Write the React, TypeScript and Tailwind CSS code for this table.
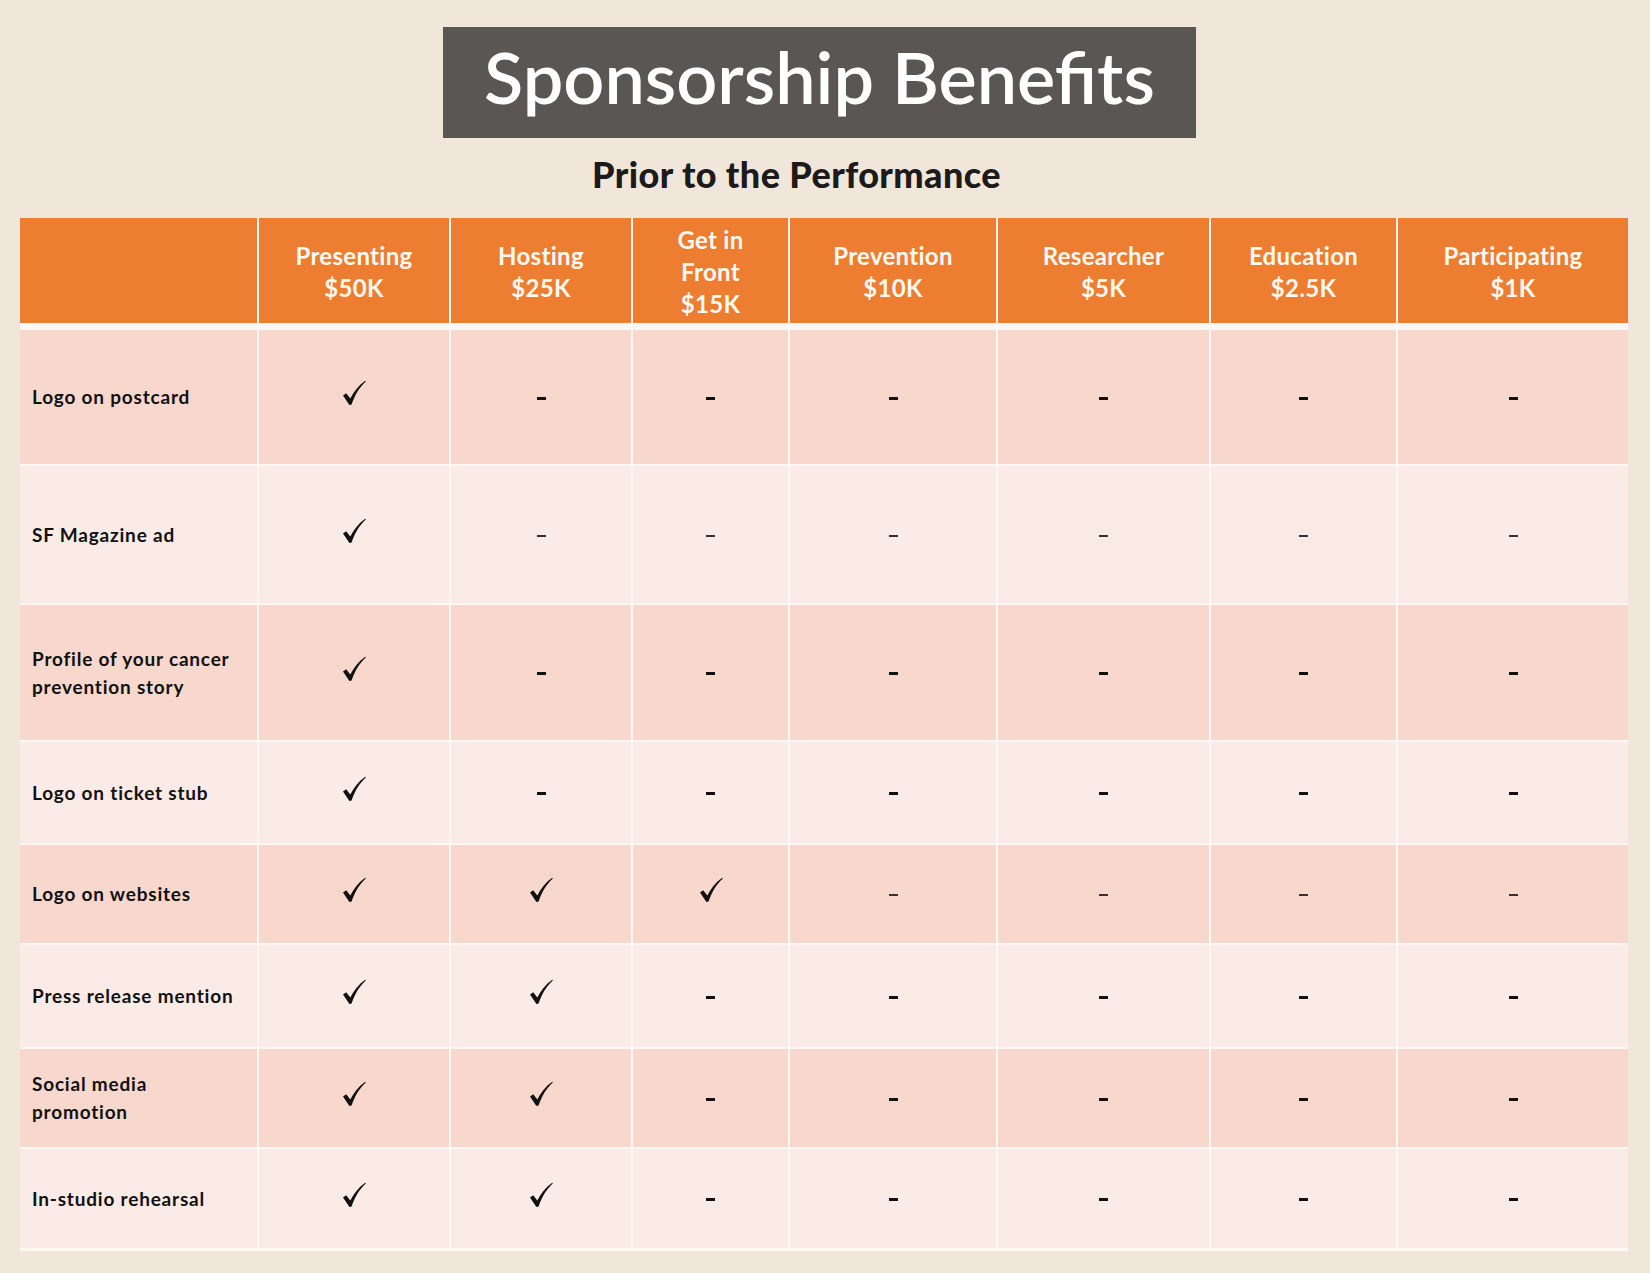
import React from "react";

// Column widths (px) — separators are the 2px grid gap showing the table bg.
const cols = "grid grid-cols-[237px_190px_180px_155px_206px_211px_185px_230px] gap-x-[2px]";

const tiers = [
  ["Presenting", "$50K"],
  ["Hosting", "$25K"],
  ["Get in", "Front", "$15K"],
  ["Prevention", "$10K"],
  ["Researcher", "$5K"],
  ["Education", "$2.5K"],
  ["Participating", "$1K"],
];

type Row = {
  label: string[];
  yes: number; // how many leading tiers get a check
  h: string;
  odd: boolean;
  thin?: boolean;
};

const rows: Row[] = [
  { label: ["Logo on postcard"], yes: 1, h: "h-[134px]", odd: true },
  { label: ["SF Magazine ad"], yes: 1, h: "h-[137px]", odd: false, thin: true },
  { label: ["Profile of your cancer", "prevention story"], yes: 1, h: "h-[135px]", odd: true },
  { label: ["Logo on ticket stub"], yes: 1, h: "h-[101px]", odd: false },
  { label: ["Logo on websites"], yes: 3, h: "h-[98px]", odd: true, thin: true },
  { label: ["Press release mention"], yes: 2, h: "h-[102px]", odd: false },
  { label: ["Social media", "promotion"], yes: 2, h: "h-[98px]", odd: true },
  { label: ["In-studio rehearsal"], yes: 2, h: "h-[99px]", odd: false },
];

function Check() {
  return (
    <svg width="24" height="26" viewBox="0 0 24 26" className="-mt-[8px]" aria-hidden>
      <path
        d="M1 15.5 L4.2 13.2 L8.3 18.6 C11.5 12 16.5 5.5 23.2 0.8 L23.8 1.6 C17.5 7.5 12.8 15 9.6 24.6 L7.4 25 Z"
        fill="#111"
      />
    </svg>
  );
}

function Dash({ thin }: { thin?: boolean }) {
  return thin ? (
    <span className="block w-[9px] h-[2px] bg-[#333] mt-[2px]" />
  ) : (
    <span className="block w-[9px] h-[3px] bg-[#111] mt-[2px]" />
  );
}

export default function App() {
  return (
    <div className="w-full min-h-[1273px] bg-[#F1E6DA] pt-[27px] font-['Lato','Noto_Sans',sans-serif]">
      <div className="ml-[443px] w-[753px] h-[111px] bg-[#595653] flex justify-center pt-[6px]">
        <h1 className="text-[72px] leading-[1.2] font-semibold text-white whitespace-nowrap">
          Sponsorship Benefits
        </h1>
      </div>

      <div className="mt-[15px] ml-[590px] w-[413px] h-[42px] flex justify-center">
        <h2 className="text-[36px] leading-[1.2] font-black text-[#1c1a1a] tracking-[0.4px] whitespace-nowrap">
          Prior to the Performance
        </h2>
      </div>

      <div className="mt-[23px] ml-[20px] w-[1608px] bg-[#FDF8F5] pb-[3px]">
        <div className={`${cols} h-[105px]`}>
          <div className="bg-[#ED7D31]" />
          {tiers.map((t) => (
            <div
              key={t.join()}
              className="bg-[#ED7D31] flex flex-col items-center justify-center pt-[3px] text-[24px] leading-[32px] tracking-[0.3px] font-bold text-[#FFF9F2]"
            >
              {t.map((line) => (
                <span key={line}>{line}</span>
              ))}
            </div>
          ))}
        </div>

        <div className="mt-[7px] flex flex-col gap-y-[2px]">
          {rows.map((r) => (
            <div key={r.label.join()} className={`${cols} ${r.h}`}>
              <div
                className={`${r.odd ? "bg-[#F8D8CD]" : "bg-[#FBEBE7]"} flex flex-col justify-center pl-[12px] text-[19px] leading-[28px] tracking-[0.8px] font-bold text-[#111]`}
              >
                {r.label.map((l) => (
                  <span key={l}>{l}</span>
                ))}
              </div>
              {tiers.map((t, i) => (
                <div
                  key={t.join()}
                  className={`${r.odd ? "bg-[#F8D8CD]" : "bg-[#FBEBE7]"} flex items-center justify-center`}
                >
                  {i < r.yes ? <Check /> : <Dash thin={r.thin} />}
                </div>
              ))}
            </div>
          ))}
        </div>
      </div>
    </div>
  );
}
